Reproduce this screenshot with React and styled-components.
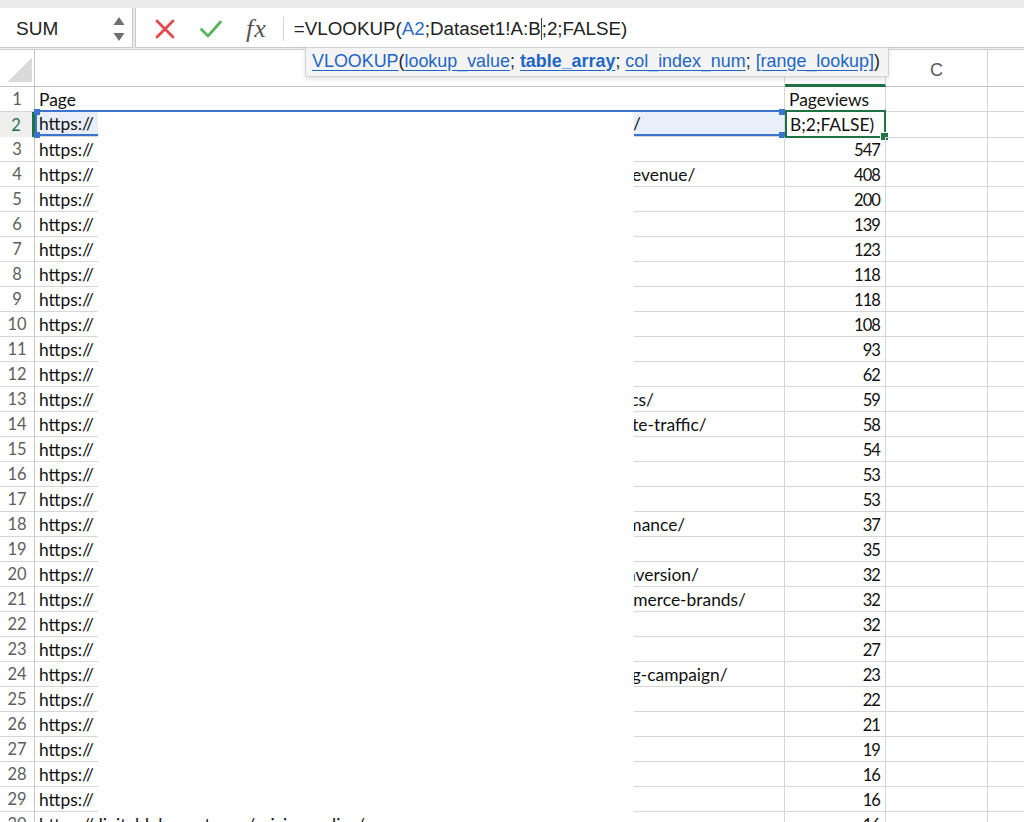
import React from "react";
import styled, { createGlobalStyle } from "styled-components";

const GlobalStyle = createGlobalStyle`
  html, body {
    margin: 0;
    padding: 0;
    background: #ffffff;
    overflow: hidden;
  }
  * { box-sizing: border-box; }
`;

const COLS = "35px 750px 101px 102px 102px";
const GRID = "#d6d6d6";
const CELL_FONT = "Lato, 'Open Sans', sans-serif";
const UI_FONT = "'Liberation Sans', Arial, sans-serif";

const Window = styled.div`
  position: relative;
  width: 1024px;
  height: 822px;
  overflow: hidden;
  background: #fff;
`;

const FormulaBar = styled.div`
  display: flex;
  align-items: flex-start;
  gap: 2px;
  height: 50px;
  padding-top: 8px;
  background: #ececec;
  border-bottom: 1px solid #cdcdcd;
`;

const NameBox = styled.div`
  display: flex;
  align-items: center;
  justify-content: space-between;
  width: 133px;
  height: 40px;
  padding: 3px 6px 0 16px;
  background: #fff;
  border-bottom: 1px solid #c9c9c9;
  border-right: 1px solid #c9c9c9;
`;

const NameText = styled.span`
  font-family: ${UI_FONT};
  font-size: 19px;
  color: #222;
`;

const FormulaArea = styled.div`
  flex: 1;
  display: flex;
  align-items: center;
  height: 40px;
  padding: 3px 0 0 18px;
  background: #fff;
  border-bottom: 1px solid #c9c9c9;
  border-left: 1px solid #c9c9c9;
`;

const ActionIcon = styled.span`
  display: flex;
  width: 45px;
  align-items: center;
`;

const Fx = styled.span`
  font-family: "Liberation Serif", "Times New Roman", serif;
  font-style: italic;
  font-size: 26px;
  color: #555;
  padding-left: 2px;
  letter-spacing: 1px;
`;

const Divider = styled.span`
  width: 1px;
  height: 24px;
  margin: 0 10px 0 16px;
  background: #d6d6d6;
`;

const FormulaText = styled.span`
  display: flex;
  align-items: center;
  font-family: ${UI_FONT};
  font-size: 18.8px;
  color: #222;
  white-space: pre;
`;

const RefText = styled.span`
  color: #2f6cc3;
`;

const Caret = styled.span`
  display: inline-block;
  width: 1px;
  height: 22px;
  background: #444;
`;

const Row = styled.div`
  display: grid;
  grid-template-columns: ${COLS};
  height: ${(p) => (p.$header ? "37px" : "25px")};
`;

const Corner = styled.div`
  position: relative;
  border-right: 1px solid #c4c4c4;
  border-bottom: 1px solid #c4c4c4;
  &::after {
    content: "";
    position: absolute;
    left: 8px;
    bottom: 4px;
    width: 24px;
    height: 24px;
    background: linear-gradient(135deg, transparent 50%, #dadada 50%);
  }
`;

const ColHead = styled.div`
  display: flex;
  align-items: center;
  justify-content: center;
  padding-top: 5px;
  font-family: ${UI_FONT};
  font-size: 18px;
  color: #5b5b5b;
  border-right: 1px solid ${GRID};
  border-bottom: ${(p) => (p.$active ? "3px solid #1f7244" : "1px solid #c4c4c4")};
`;

const RowHead = styled.div`
  display: flex;
  align-items: center;
  justify-content: center;
  font-family: ${CELL_FONT};
  font-size: 16.5px;
  color: ${(p) => (p.$active ? "#1f7244" : "#5e5e5e")};
  background: ${(p) => (p.$active ? "#eeeeee" : "#fff")};
  border-right: ${(p) => (p.$active ? "3px solid #1f7244" : "1px solid #c4c4c4")};
  border-bottom: 1px solid ${GRID};
`;

const Cell = styled.div`
  position: relative;
  display: flex;
  align-items: center;
  justify-content: ${(p) => (p.$right ? "flex-end" : "flex-start")};
  padding: 1px 5px 0 4px;
  font-family: ${CELL_FONT};
  font-size: ${(p) => (p.$right ? "16.5px" : "17.4px")};
  letter-spacing: ${(p) => (p.$right ? "-0.9px" : "0")};
  color: #111;
  white-space: nowrap;
  border-right: 1px solid ${GRID};
  border-bottom: 1px solid ${GRID};
`;

const RefCell = styled(Cell)`
  background: #e8effa;
  box-shadow: inset 0 2px 0 #3a74cc, inset 0 -2px 0 #3a74cc, inset 2px 0 0 #3a74cc;
  margin-top: -2px;
  height: 27px;
  &::after {
    content: "";
    position: absolute;
    left: -1px;
    top: -1px;
    width: 6px;
    height: 6px;
    background: #3a74cc;
    box-shadow: 745px 0 #3a74cc, 0 23px #3a74cc, 745px 23px #3a74cc;
  }
`;

const ActiveCell = styled(Cell)`
  margin-top: -2px;
  height: 28px;
  border: 2px solid #1f7244;
  padding-left: 3px;
  &::after {
    content: "";
    position: absolute;
    right: -5px;
    bottom: -5px;
    width: 7px;
    height: 7px;
    background: #1f7244;
    border: 1px solid #fff;
  }
`;

const Scheme = styled.span`
  display: inline-block;
  width: 594px;
`;

const Tail = styled.span`
  margin-left: ${(p) => p.$shift}px;
`;

const Redaction = styled.div`
  position: absolute;
  left: 98px;
  top: 112px;
  width: 536px;
  height: 700px;
  background: #fefefe;
`;

const Tooltip = styled.div`
  position: absolute;
  left: 305px;
  top: 47px;
  height: 30px;
  display: flex;
  align-items: center;
  padding: 0 8px 2px 6px;
  background: #f4f4f4;
  border: 1px solid #d4d4d4;
  border-radius: 2px;
  box-shadow: 0 2px 4px rgba(0, 0, 0, 0.12);
  font-family: ${UI_FONT};
  font-size: 17.9px;
  color: #222;
  white-space: pre;
`;

const Arg = styled.span`
  color: #1d66c4;
  text-decoration: underline;
  text-underline-offset: 3px;
  font-weight: ${(p) => (p.$bold ? 700 : 400)};
`;

const values = [547, 408, 200, 139, 123, 118, 118, 108, 93, 62, 59, 58, 54, 53, 53, 37, 35, 32, 32, 32, 27, 23, 22, 21, 19, 16, 16, 16];

const tails = {
  2: ["/", 0],
  4: ["revenue/", -7],
  13: ["ics/", -7],
  14: ["ite-traffic/", -5],
  18: ["rmance/", -12],
  20: ["nversion/", -7],
  21: ["mmerce-brands/", -14],
  24: ["ng-campaign/", -11],
};

const UrlText = ({ n }) => {
  if (n === 30) return "https://digitaldelement.com/pricing-policy/";
  const tail = tails[n];
  return (
    <>
      <Scheme>https://</Scheme>
      {tail && <Tail $shift={tail[1]}>{tail[0]}</Tail>}
    </>
  );
};

const Stepper = () => (
  <svg width="14" height="30" viewBox="0 0 14 30">
    <path d="M7 3 L12.5 11 L1.5 11 Z" fill="#6f6f6f" />
    <path d="M7 27 L12.5 19 L1.5 19 Z" fill="#6f6f6f" />
  </svg>
);

const Cancel = () => (
  <svg width="22" height="22" viewBox="0 0 22 22">
    <path d="M3 3 L19 19 M19 3 L3 19" stroke="#e2474b" strokeWidth="2.8" strokeLinecap="round" />
  </svg>
);

const Confirm = () => (
  <svg width="24" height="22" viewBox="0 0 24 22">
    <path d="M2.5 11.5 L9 18 L21.5 4" fill="none" stroke="#57b560" strokeWidth="2.8" strokeLinecap="round" strokeLinejoin="round" />
  </svg>
);

const App = () => {
  return (
    <Window>
      <GlobalStyle />
      <FormulaBar>
        <NameBox>
          <NameText>SUM</NameText>
          <Stepper />
        </NameBox>
        <FormulaArea>
          <ActionIcon><Cancel /></ActionIcon>
          <ActionIcon><Confirm /></ActionIcon>
          <Fx>fx</Fx>
          <Divider />
          <FormulaText>
            =VLOOKUP(<RefText>A2</RefText>;Dataset1!A:B<Caret />;2;FALSE)
          </FormulaText>
        </FormulaArea>
      </FormulaBar>

      <Row $header>
        <Corner />
        <ColHead />
        <ColHead $active />
        <ColHead>C</ColHead>
        <ColHead />
      </Row>

      <Row>
        <RowHead>1</RowHead>
        <Cell>Page</Cell>
        <Cell>Pageviews</Cell>
        <Cell />
        <Cell />
      </Row>

      <Row>
        <RowHead $active>2</RowHead>
        <RefCell><UrlText n={2} /></RefCell>
        <ActiveCell>B;2;FALSE)</ActiveCell>
        <Cell />
        <Cell />
      </Row>

      {values.map((v, i) => {
        const n = i + 3;
        return (
          <Row key={n}>
            <RowHead>{n}</RowHead>
            <Cell><UrlText n={n} /></Cell>
            <Cell $right>{v}</Cell>
            <Cell />
            <Cell />
          </Row>
        );
      })}

      <Redaction />

      <Tooltip>
        <Arg>VLOOKUP</Arg>(<Arg>lookup_value</Arg>; <Arg $bold>table_array</Arg>; <Arg>col_index_num</Arg>; <Arg>[range_lookup]</Arg>)
      </Tooltip>
    </Window>
  );
};

export default App;
